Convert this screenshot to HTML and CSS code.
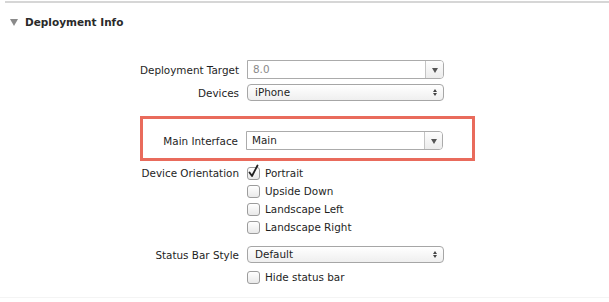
FILE: index.html
```html
<!DOCTYPE html>
<html>
  <head>
    <meta charset="utf-8">
    <title>Deployment Info</title>
    <link rel="stylesheet" href="styles.css">
  </head>
  <body>
    <div class="section">
      <div class="section-head">
        <span class="disclosure"></span>
        <span class="section-title">Deployment Info</span>
      </div>

      <div class="row row-first">
        <label class="label">Deployment Target</label>
        <div class="combo">
          <span class="combo-value muted">8.0</span>
          <span class="combo-btn"><span class="down"></span></span>
        </div>
      </div>

      <div class="row row-popup">
        <label class="label">Devices</label>
        <div class="popup">
          <span class="popup-value">iPhone</span>
          <span class="updown"><i class="up"></i><i class="down-sm"></i></span>
        </div>
      </div>

      <div class="highlight">
        <label class="label">Main Interface</label>
        <div class="combo">
          <span class="combo-value">Main</span>
          <span class="combo-btn"><span class="down"></span></span>
        </div>
      </div>

      <div class="row row-checks">
        <label class="label top">Device Orientation</label>
        <div class="checks">
          <div class="check">
            <span class="box">
              <svg width="13" height="15" viewBox="0 0 13 15"><path d="M2.5 8.5 L5 12 L10.5 1.5" fill="none" stroke="#222" stroke-width="1.8" stroke-linecap="round" stroke-linejoin="round"/></svg>
            </span>
            Portrait
          </div>
          <div class="check"><span class="box"></span>Upside Down</div>
          <div class="check"><span class="box"></span>Landscape Left</div>
          <div class="check"><span class="box"></span>Landscape Right</div>
        </div>
      </div>

      <div class="row row-status">
        <label class="label">Status Bar Style</label>
        <div class="popup">
          <span class="popup-value">Default</span>
          <span class="updown"><i class="up"></i><i class="down-sm"></i></span>
        </div>
      </div>

      <div class="row row-hide">
        <span></span>
        <div class="check"><span class="box"></span>Hide status bar</div>
      </div>
    </div>
    <div class="bottom-rule"></div>
  </body>
</html>
```

FILE: styles.css
```css
body { margin: 0; background: #fff; font-family: "DejaVu Sans", sans-serif; font-size: 10.4px; color: #1e1e1e; }

.section { margin: 1px 0 0 5px; border-top: 2px solid #d6d6d6; height: 294px; }
.section-head { display: flex; align-items: center; gap: 7px; padding: 13px 0 0 5px; height: 11px; }
.disclosure { width: 0; height: 0; border-left: 4px solid transparent; border-right: 4px solid transparent; border-top: 7px solid #8a8a8a; margin-top: 1px; }
.section-title { font-weight: bold; font-size: 10.5px; color: #2a2a2a; }

.row { display: grid; grid-template-columns: 234px 197px; column-gap: 8px; align-items: center; }
.label { text-align: right; white-space: nowrap; }
.label.top { align-self: start; padding-top: 3px; }

.row-first { margin-top: 33px; }
.row-popup { margin-top: 5px; }
.row-checks { margin-top: 3px; }
.row-status { margin-top: 10px; }
.row-hide { margin-top: 5px; }

/* combo box: text field with a drop button */
.combo { display: flex; height: 19px; box-sizing: border-box; border: 1px solid #ababab; border-radius: 0 4px 4px 0; background: #fff; }
.combo-value { flex: 1; padding: 0 5px; line-height: 17px; }
.muted { color: #8a8a8a; }
.combo-btn { width: 17px; border-left: 1px solid #c4c4c4; background: linear-gradient(#fdfdfd, #ececec); border-radius: 0 3px 3px 0; display: flex; align-items: center; justify-content: center; }
.down { width: 0; height: 0; border-left: 3.5px solid transparent; border-right: 3.5px solid transparent; border-top: 5px solid #555; margin-top: 1px; }

/* popup button */
.popup { display: flex; align-items: center; height: 17px; box-sizing: border-box; border: 1px solid #a6a6a6; border-radius: 4px; background: linear-gradient(#ffffff, #efefef); }
.popup-value { flex: 1; padding-left: 7px; line-height: 15px; }
.updown { display: flex; flex-direction: column; align-items: center; gap: 1px; width: 16px; }
.up { width: 0; height: 0; border-left: 2.5px solid transparent; border-right: 2.5px solid transparent; border-bottom: 3px solid #444; }
.down-sm { width: 0; height: 0; border-left: 2.5px solid transparent; border-right: 2.5px solid transparent; border-top: 3px solid #444; }

.highlight { display: grid; grid-template-columns: 95px 197px; column-gap: 8px; align-items: center; box-sizing: border-box; width: 335px; margin: 15px 0 0 135px; padding: 12px 0 8px; border: 3px solid #e96b5c; }

/* checkboxes */
.checks { display: flex; flex-direction: column; }
.check { display: flex; align-items: center; gap: 5px; height: 18px; }
.box { position: relative; width: 11px; height: 11px; border: 1px solid #9c9c9c; border-radius: 3px; background: linear-gradient(#ffffff, #e9e9e9); flex: none; }
.box svg { position: absolute; left: -1px; top: -4px; }

.bottom-rule { height: 1px; background: #f4f4f4; }
```
